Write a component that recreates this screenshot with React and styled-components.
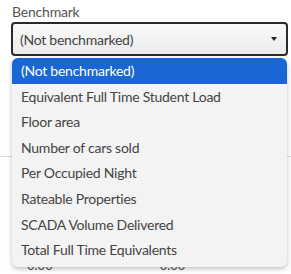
import React from 'react'
import styled, { createGlobalStyle } from 'styled-components'

const options = [
  '(Not benchmarked)',
  'Equivalent Full Time Student Load',
  'Floor area',
  'Number of cars sold',
  'Per Occupied Night',
  'Rateable Properties',
  'SCADA Volume Delivered',
  'Total Full Time Equivalents'
]

const App = () => {
  const selected = 0
  return (
    <React.Fragment>
      <GlobalStyle />
      <Page>
        <Field>
          <Label>Benchmark</Label>
          <SelectBox>
            <SelectText>{options[selected]}</SelectText>
            <Caret />
          </SelectBox>
        </Field>

        <Backdrop>
          <Divider />
          <Values>
            <Value>0.00</Value>
            <Value>0.00</Value>
          </Values>
        </Backdrop>

        <Menu>
          {options.map((opt, i) => (
            <Option key={opt} active={i === selected}>{opt}</Option>
          ))}
        </Menu>
      </Page>
    </React.Fragment>
  )
}

const GlobalStyle = createGlobalStyle`
body {
  margin: 0;
  background: #fff;
  font-family: Lato, "Liberation Sans", sans-serif;
}
`

const Page = styled.div`
position: relative;
width: 291px;
height: 274px;
overflow: hidden;
`

const Field = styled.div`
padding: 0 3px 0 11px;
`

const Label = styled.div`
height: 22px;
line-height: 24px;
font-size: 14px;
letter-spacing: -0.2px;
color: #555;
padding-left: 1px;
`

const SelectBox = styled.div`
display: flex;
align-items: center;
justify-content: space-between;
height: 34px;
box-sizing: border-box;
border: 2px solid #2a2a2a;
border-radius: 4px;
background: linear-gradient(#f9f9f9, #ebebeb);
padding: 0 9px 0 7px;
`

const SelectText = styled.span`
font-size: 14px;
letter-spacing: -0.25px;
color: #444;
`

const Caret = styled.span`
width: 0;
height: 0;
border-left: 3.5px solid transparent;
border-right: 3.5px solid transparent;
border-top: 4px solid #222;
`

const Backdrop = styled.div`
margin-top: 100px;
`

const Divider = styled.div`
height: 1px;
background: #ddd;
`

const Values = styled.div`
display: flex;
gap: 107px;
padding: 100px 0 0 27px;
`

const Value = styled.span`
font-size: 13px;
color: #555;
`

const Menu = styled.div`
position: absolute;
top: 58px;
left: 12px;
width: 275px;
background: #f3f3f3;
border-radius: 6px;
box-shadow: 0 2px 5px rgba(0, 0, 0, 0.25);
overflow: hidden;
padding-bottom: 4px;
`

const Option = styled.div`
height: 25.6px;
line-height: 25.6px;
padding-left: 9px;
font-size: 14px;
letter-spacing: -0.25px;
color: ${p => (p.active ? '#fff' : '#444')};
background: ${p => (p.active ? '#1a66d2' : 'transparent')};
`

export default App
